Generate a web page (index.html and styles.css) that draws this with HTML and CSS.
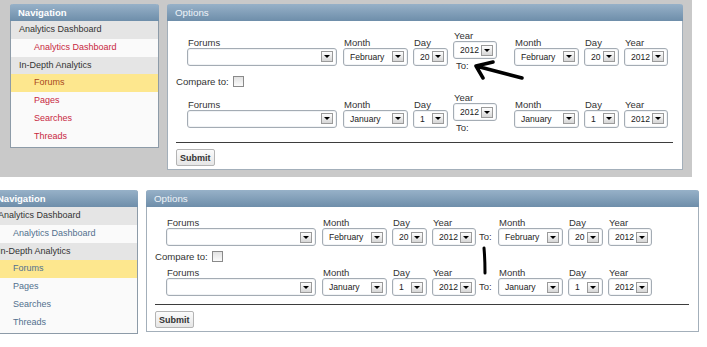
FILE: index.html
```html
<!doctype html>
<html lang="en">
<head>
    <meta charset="utf-8">
    <meta name="viewport" content="width=device-width, initial-scale=1">
    <title>Forum Analytics - Options</title>
    <link rel="stylesheet" href="styles.css">
</head>
<body>
    <!-- Captura 1: ventana estrecha, "To:" cae debajo del año -->
    <div class="shot shot-top">
        <div class="panel nav">
            <div class="panel-head">Navigation</div>
            <ul class="nav-list">
                <li class="group">Analytics Dashboard</li>
                <li class="item">Analytics Dashboard</li>
                <li class="group">In-Depth Analytics</li>
                <li class="item active">Forums</li>
                <li class="item">Pages</li>
                <li class="item">Searches</li>
                <li class="item">Threads</li>
            </ul>
        </div>

        <div class="panel options">
            <div class="panel-head light">Options</div>
            <form class="options-body">
                <div class="date-row">
                    <div class="field f-forum"><label>Forums</label><div class="select"><span></span><i class="drop"></i></div></div>
                    <div class="field f-month"><label>Month</label><div class="select"><span>February</span><i class="drop"></i></div></div>
                    <div class="field f-day"><label>Day</label><div class="select"><span>20</span><i class="drop"></i></div></div>
                    <div class="field f-year"><label>Year</label><div class="select"><span>2012</span><i class="drop"></i></div><span class="to-under">To:</span></div>
                    <div class="field f-month wide-gap"><label>Month</label><div class="select"><span>February</span><i class="drop"></i></div></div>
                    <div class="field f-day"><label>Day</label><div class="select"><span>20</span><i class="drop"></i></div></div>
                    <div class="field f-year"><label>Year</label><div class="select"><span>2012</span><i class="drop"></i></div></div>
                </div>

                <div class="compare">Compare to: <span class="check"></span></div>

                <div class="date-row">
                    <div class="field f-forum"><label>Forums</label><div class="select"><span></span><i class="drop"></i></div></div>
                    <div class="field f-month"><label>Month</label><div class="select"><span>January</span><i class="drop"></i></div></div>
                    <div class="field f-day"><label>Day</label><div class="select"><span>1</span><i class="drop"></i></div></div>
                    <div class="field f-year"><label>Year</label><div class="select"><span>2012</span><i class="drop"></i></div><span class="to-under">To:</span></div>
                    <div class="field f-month wide-gap"><label>Month</label><div class="select"><span>January</span><i class="drop"></i></div></div>
                    <div class="field f-day"><label>Day</label><div class="select"><span>1</span><i class="drop"></i></div></div>
                    <div class="field f-year"><label>Year</label><div class="select"><span>2012</span><i class="drop"></i></div></div>
                </div>

                <hr class="rule">
                <button type="button" class="submit">Submit</button>
            </form>
        </div>

        <!-- Flecha dibujada a mano -->
        <svg class="mark-arrow" width="60" height="30" viewBox="0 0 60 30">
            <path d="M6 11 L52 23 M6 11 L23 7 M6 11 L13 23" fill="none" stroke="#000" stroke-width="3.5" stroke-linecap="round"/>
        </svg>
    </div>

    <!-- Captura 2: ventana ancha, "To:" en linea -->
    <div class="shot shot-bottom">
        <div class="panel nav">
            <div class="panel-head">Navigation</div>
            <ul class="nav-list blue">
                <li class="group">Analytics Dashboard</li>
                <li class="item">Analytics Dashboard</li>
                <li class="group">In-Depth Analytics</li>
                <li class="item active">Forums</li>
                <li class="item">Pages</li>
                <li class="item">Searches</li>
                <li class="item">Threads</li>
            </ul>
        </div>

        <div class="panel options wide">
            <div class="panel-head light">Options</div>
            <form class="options-body">
                <div class="date-row">
                    <div class="field f-forum"><label>Forums</label><div class="select"><span></span><i class="drop"></i></div></div>
                    <div class="field f-month"><label>Month</label><div class="select"><span>February</span><i class="drop"></i></div></div>
                    <div class="field f-day"><label>Day</label><div class="select"><span>20</span><i class="drop"></i></div></div>
                    <div class="field f-year"><label>Year</label><div class="select"><span>2012</span><i class="drop"></i></div></div>
                    <span class="to-inline">To:</span>
                    <div class="field f-month no-gap"><label>Month</label><div class="select"><span>February</span><i class="drop"></i></div></div>
                    <div class="field f-day"><label>Day</label><div class="select"><span>20</span><i class="drop"></i></div></div>
                    <div class="field f-year"><label>Year</label><div class="select"><span>2012</span><i class="drop"></i></div></div>
                </div>

                <div class="compare">Compare to: <span class="check"></span></div>

                <div class="date-row">
                    <div class="field f-forum"><label>Forums</label><div class="select"><span></span><i class="drop"></i></div></div>
                    <div class="field f-month"><label>Month</label><div class="select"><span>January</span><i class="drop"></i></div></div>
                    <div class="field f-day"><label>Day</label><div class="select"><span>1</span><i class="drop"></i></div></div>
                    <div class="field f-year"><label>Year</label><div class="select"><span>2012</span><i class="drop"></i></div></div>
                    <span class="to-inline">To:</span>
                    <div class="field f-month no-gap"><label>Month</label><div class="select"><span>January</span><i class="drop"></i></div></div>
                    <div class="field f-day"><label>Day</label><div class="select"><span>1</span><i class="drop"></i></div></div>
                    <div class="field f-year"><label>Year</label><div class="select"><span>2012</span><i class="drop"></i></div></div>
                </div>

                <hr class="rule">
                <button type="button" class="submit">Submit</button>
            </form>
        </div>

        <!-- Marca vertical dibujada a mano -->
        <svg class="mark-line" width="10" height="32" viewBox="0 0 10 32">
            <path d="M4 3 Q5 14 5 28" fill="none" stroke="#000" stroke-width="3" stroke-linecap="round"/>
        </svg>
    </div>
</body>
</html>
```

FILE: styles.css
```css
/* Variables de color */
:root {
    --page-bg: #ffffff;
    --frame-gray: #c9c9c9;
    --panel-border: #8d9ba8;
    --head-top: #97b1c8;
    --head-bottom: #6e8eaa;
    --group-bg: #e5e5e5;
    --item-bg: #fafafa;
    --active-bg: #fde78e;
    --link-red: #c8283f;
    --link-blue: #52708e;
    --text-color: #333;
}

body {
    background-color: var(--page-bg);
    color: var(--text-color);
    font-family: "Liberation Sans", Arial, sans-serif;
    margin: 0;
    padding: 0;
    overflow: hidden;
}

.shot {
    position: relative;
    display: flex;
    align-items: flex-start;
    gap: 8px;
}

.shot-top {
    background-color: var(--frame-gray);
    width: 692px;
    height: 177px;
    box-sizing: border-box;
    padding: 4px 0 0 10px;
}

.shot-bottom {
    margin-top: 13px;
    margin-left: -11px;
}

/* Paneles */
.panel {
    border: 1px solid var(--panel-border);
    border-top: none;
    border-radius: 3px 3px 0 0;
    box-sizing: border-box;
}

.nav {
    width: 149px;
    background-color: var(--item-bg);
}

.options {
    width: 516px;
    background-color: #fff;
    border-color: #a3afba;
}

.options.wide {
    width: 553px;
}

.panel-head {
    height: 17px;
    line-height: 17px;
    margin: 0 -1px;
    padding-left: 8px;
    background: linear-gradient(var(--head-top), var(--head-bottom));
    border-radius: 3px 3px 0 0;
    color: #fff;
    font-weight: bold;
    font-size: 9.5px;
}

.panel-head.light {
    font-weight: normal;
    color: #eef3f8;
    font-size: 9.8px;
}

/* Lista de navegacion */
.nav-list {
    list-style: none;
    margin: 0;
    padding: 0 0 1px 0;
    font-size: 9px;
}

.nav-list li {
    height: 17.8px;
    line-height: 17.8px;
    padding-left: 8px;
}

.nav-list .group {
    background-color: var(--group-bg);
    color: var(--text-color);
}

.nav-list .item {
    padding-left: 23px;
    color: var(--link-red);
}

.nav-list .item.active {
    background-color: var(--active-bg);
    color: #a9481c;
}

.nav-list.blue .item,
.nav-list.blue .item.active {
    color: var(--link-blue);
}

/* Formulario de opciones */
.options-body {
    padding: 9px 9px 3px 8px;
    margin: 0;
}

.wide .options-body {
    padding-top: 10px;
}

.date-row {
    display: flex;
    align-items: center;
    margin-left: 11px;
}

.field {
    display: flex;
    flex-direction: column;
    margin-left: 5px;
}

.field label {
    height: 11px;
    line-height: 11px;
    padding-left: 1px;
    font-size: 9.5px;
    color: #333;
}

.f-forum { width: 150px; margin-left: 0; }
.f-forum + .f-month { margin-left: 6px; }
.f-month { width: 65px; }
.f-day { width: 35px; }
.f-year { width: 44px; }
.wide-gap { margin-left: 17px; }
.no-gap { margin-left: 0; }

.select {
    height: 18px;
    box-sizing: border-box;
    border: 1px solid #a4acb4;
    border-radius: 3px;
    background-color: #fff;
    box-shadow: inset 0 0 0 1px #f1f3f5;
    display: flex;
    align-items: center;
    justify-content: space-between;
    padding: 0 3px 0 6px;
    font-size: 8.6px;
    color: #222;
}

.drop {
    width: 12px;
    height: 11px;
    box-sizing: border-box;
    border: 1px solid #9a9a9a;
    background: linear-gradient(#fefefe, #d6d6d6);
    display: flex;
    align-items: center;
    justify-content: center;
}

.drop::after {
    content: "";
    border-left: 3px solid transparent;
    border-right: 3px solid transparent;
    border-top: 3px solid #000;
}

.to-under {
    height: 13px;
    line-height: 13px;
    padding-left: 3px;
    font-size: 9.5px;
}

.to-inline {
    align-self: flex-end;
    height: 18px;
    line-height: 18px;
    width: 19px;
    margin-left: 3px;
    font-size: 9.5px;
}

.compare {
    display: flex;
    align-items: center;
    height: 11px;
    margin: 4px 0 5px;
    font-size: 9.6px;
}

.wide .compare {
    margin: 5px 0 5px;
}

.check {
    display: inline-block;
    width: 9px;
    height: 9px;
    margin-left: 4px;
    border: 1px solid #8a8a8a;
    background: linear-gradient(#e2e2e2, #fbfbfb);
}

.rule {
    border: none;
    border-top: 1px solid #3d3d3d;
    margin: 8px 0 6px;
}

.submit {
    display: block;
    height: 17px;
    padding: 0 3px;
    border: 1px solid #b4b4b4;
    border-radius: 2px;
    background: linear-gradient(#fbfbfb, #e6e6e6);
    font-family: "Liberation Sans", Arial, sans-serif;
    font-weight: bold;
    font-size: 9px;
    color: #333;
}

/* Marcas a mano sobre la captura */
.mark-arrow {
    position: absolute;
    left: 470px;
    top: 55px;
}

.mark-line {
    position: absolute;
    left: 491px;
    top: 55px;
}
```
